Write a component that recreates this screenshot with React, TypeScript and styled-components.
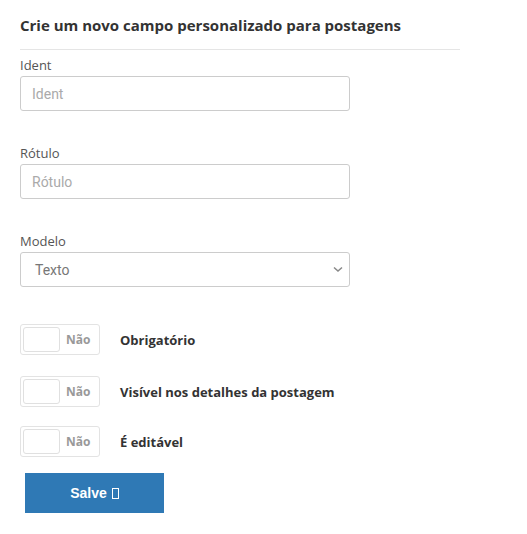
import styled, { createGlobalStyle } from "styled-components";

const GlobalStyle = createGlobalStyle`
    body {
        margin: 0;
        background: #fff;
        font-family: "Open Sans", "Liberation Sans", sans-serif;
        color: #555;
    }
`;

const Page = styled.div`
    padding: 15px 20px 20px;
    width: 440px;
`;

const Title = styled.h3`
    margin: 0;
    padding-bottom: 14px;
    border-bottom: 1px solid #e5e5e5;
    font-size: 15px;
    font-weight: 700;
    color: #333;
    line-height: 20px;
`;

const Group = styled.div`
    display: flex;
    flex-direction: column;
    width: 330px;
    margin-top: ${props => props.first ? "6px" : "33px"};
`;

const Label = styled.label`
    font-size: 13px;
    line-height: 18px;
    color: #555;
    margin-bottom: 2px;
`;

const Input = styled.input`
    box-sizing: border-box;
    height: 35px;
    border: 1px solid #ccc;
    border-radius: 3px;
    padding: 0 11px;
    font-family: Roboto, "Liberation Sans", sans-serif;
    font-size: 14px;
    color: #555;
    outline: none;
    &::placeholder {
        color: #aaa;
    }
`;

const SelectBox = styled.div`
    position: relative;
    box-sizing: border-box;
    height: 35px;
    border: 1px solid #ccc;
    border-radius: 3px;
    display: flex;
    align-items: center;
    padding: 0 14px;
    font-family: Roboto, "Liberation Sans", sans-serif;
    font-size: 14px;
    color: #777;
`;

const Chevron = styled.svg`
    position: absolute;
    right: 6px;
    top: 13px;
`;

const Toggles = styled.div`
    display: flex;
    flex-direction: column;
    gap: 21px;
    margin-top: 37px;
`;

const ToggleRow = styled.div`
    display: flex;
    align-items: center;
    gap: 20px;
    margin-top: ${props => props.tight ? "-2px" : "0"};
`;

const Switch = styled.div`
    box-sizing: border-box;
    width: 80px;
    height: 31px;
    border: 1px solid #e3e3e3;
    border-radius: 3px;
    display: flex;
    align-items: center;
    padding-left: 2px;
    gap: 6px;
`;

const Knob = styled.div`
    box-sizing: border-box;
    width: 37px;
    height: 25px;
    border: 1px solid #e0e0e0;
    border-radius: 3px;
    background: #fff;
`;

const SwitchText = styled.span`
    font-size: 12px;
    font-weight: 700;
    color: #999;
`;

const ToggleLabel = styled.span`
    font-size: 13px;
    font-weight: 700;
    color: #333;
`;

const SaveButton = styled.button`
    margin: 16px 0 0 5px;
    width: 139px;
    height: 40px;
    border: none;
    border-radius: 0;
    background: #2f79b5;
    color: #fff;
    font-family: "Liberation Sans", Arial, sans-serif;
    font-size: 14px;
    font-weight: 700;
    display: flex;
    align-items: center;
    justify-content: center;
    gap: 5px;
`;

const Tofu = styled.span`
    display: inline-block;
    box-sizing: border-box;
    width: 7px;
    height: 11px;
    border: 1px solid #fff;
    margin-top: 1px;
`;

const toggles = ["Obrigatório", "Visível nos detalhes da postagem", "É editável"];

export default function App() {
    return (
        <Page>
            <GlobalStyle />
            <Title>Crie um novo campo personalizado para postagens</Title>
            <Group first>
                <Label>Ident</Label>
                <Input placeholder="Ident" />
            </Group>
            <Group>
                <Label>Rótulo</Label>
                <Input placeholder="Rótulo" />
            </Group>
            <Group>
                <Label>Modelo</Label>
                <SelectBox>
                    Texto
                    <Chevron width="10" height="7" viewBox="0 0 10 7">
                        <path d="M1 1.5 L5 5 L9 1.5" fill="none" stroke="#888" strokeWidth="1.5" />
                    </Chevron>
                </SelectBox>
            </Group>
            <Toggles>
                {toggles.map((t, i) => (
                    <ToggleRow key={t} tight={i === 2}>
                        <Switch>
                            <Knob />
                            <SwitchText>Não</SwitchText>
                        </Switch>
                        <ToggleLabel>{t}</ToggleLabel>
                    </ToggleRow>
                ))}
            </Toggles>
            <SaveButton>
                Salve <Tofu />
            </SaveButton>
        </Page>
    );
}
